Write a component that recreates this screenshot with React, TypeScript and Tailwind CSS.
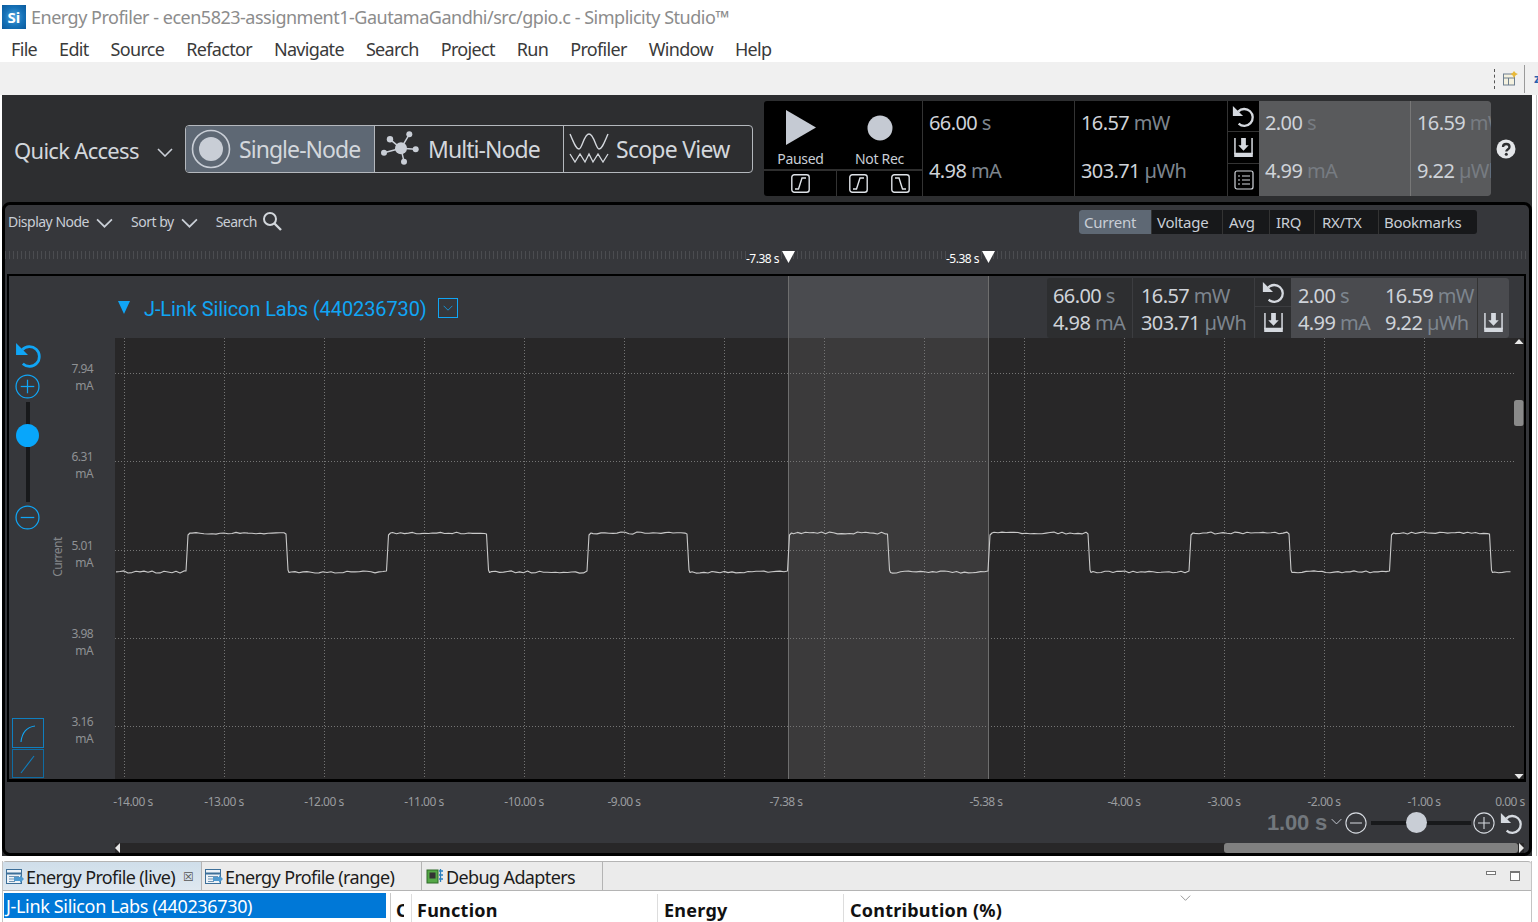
import React from "react";

const F = { fontFamily: '"Noto Sans", sans-serif' };

function Chevron({ c = "#c9ced6", w = 16, h = 9, sw = 1.6 }: { c?: string; w?: number; h?: number; sw?: number }) {
  return (
    <svg width={w} height={h} viewBox="0 0 16 9" className="shrink-0">
      <path d="M1 1 L8 8 L15 1" fill="none" stroke={c} strokeWidth={sw} />
    </svg>
  );
}
function Reload({ c = "#d5d9df", s = 22 }: { c?: string; s?: number }) {
  return (
    <svg width={s} height={s} viewBox="0 0 26 26" className="shrink-0">
      <path d="M7 7.5 A9.5 9.5 0 1 1 7.5 21" fill="none" stroke={c} strokeWidth="2.6" />
      <path d="M1 1 L1 12.5 L12.5 12.5 Z" fill={c} />
    </svg>
  );
}
function Save({ c = "#d5d9df", s = 20 }: { c?: string; s?: number }) {
  return (
    <svg width={s} height={s} viewBox="0 0 20 20" className="shrink-0">
      <path d="M1 0 V17 M19 0 V17" fill="none" stroke={c} strokeWidth="1.6" />
      <path d="M0.2 15.5 H19.8 V20 H0.2 Z" fill={c} />
      <path d="M7.5 0 H12.5 V7.5 H15.5 L10 13.5 L4.5 7.5 H7.5 Z" fill={c} />
    </svg>
  );
}
function CircleBtn({ minus, c, s = 24 }: { minus?: boolean; c: string; s?: number }) {
  return (
    <svg width={s} height={s} viewBox="0 0 24 24" className="shrink-0">
      <circle cx="12" cy="12" r="11" fill="none" stroke={c} strokeWidth="1.2" />
      <path d="M5.5 12 H18.5" stroke={c} strokeWidth="1.2" />
      {!minus && <path d="M12 5.5 V18.5" stroke={c} strokeWidth="1.2" />}
    </svg>
  );
}
function Edge({ fall }: { fall?: boolean }) {
  return (
    <svg width="19" height="19" viewBox="0 0 19 19" className="shrink-0">
      <rect x="0.8" y="0.8" width="17.4" height="17.4" rx="2.5" fill="none" stroke="#dfe3e8" strokeWidth="1.4" />
      <path d={fall ? "M4 4 H8 L11.5 15 H15" : "M4 15 H7.5 L11 4 H15"} fill="none" stroke="#dfe3e8" strokeWidth="1.4" />
    </svg>
  );
}
function Val({ v, u, dim = "#7d858e" }: { v: string; u: string; dim?: string }) {
  return (
    <div className="whitespace-nowrap text-[20px] leading-[24px] tracking-[-0.6px] text-[#cfd3d9]">
      {v} <span style={{ color: dim }}>{u}</span>
    </div>
  );
}
function TabIcon() {
  return (
    <svg width="18" height="16" viewBox="0 0 18 16" className="shrink-0">
      <rect x="0.5" y="0.5" width="15" height="14" fill="#eef3f8" stroke="#3d6f99" />
      <path d="M1 4.5 H15" stroke="#3d6f99" strokeWidth="2" />
      <path d="M3 7.5 H13 M3 10 H9 M3 12.5 H9" stroke="#6f94b3" />
      <path d="M8 8 H14 V6 L18 10 L14 14 V12 H8 Z" fill="#4f9ad0" />
    </svg>
  );
}
function Tab({ label, w, active, close, icon }: { label: string; w: number; active?: boolean; close?: boolean; icon: React.ReactNode }) {
  return (
    <div
      style={{ width: w }}
      className={`flex h-full shrink-0 items-center gap-[2px] border-r border-[#b4b4b4] pl-[3px] pt-[2px] text-[18px] tracking-[-0.62px] text-[#1c1c1c] ${
        active ? "bg-gradient-to-b from-[#cfdeea] to-[#dfe8f0]" : ""
      }`}
    >
      {icon}
      <span className="whitespace-nowrap">{label}</span>
      {close && <span className="ml-[6px] text-[12px] leading-none text-[#555]">☒</span>}
    </div>
  );
}

const xticks = [124.5, 224.5, 324.5, 424.5, 524.5, 624.5, 724.5, 824.5, 924.5, 1024.5, 1124.5, 1224.5, 1324.5, 1424.5];
const yticks = [373.5, 461.5, 550.5, 638.5, 726.5];
const ylabels: [string, number][] = [["7.94", 368], ["6.31", 456], ["5.01", 545], ["3.98", 633], ["3.16", 721]];
const timeLabels: [string, number][] = [
  ["-14.00 s", 133], ["-13.00 s", 224], ["-12.00 s", 324], ["-11.00 s", 424], ["-10.00 s", 524], ["-9.00 s", 624],
  ["-7.38 s", 786], ["-5.38 s", 986], ["-4.00 s", 1124], ["-3.00 s", 1224], ["-2.00 s", 1324], ["-1.00 s", 1424], ["0.00 s", 1510],
];

function noise(x: number) {
  const r = Math.sin(x * 12.9898) * 43758.5453;
  return (r - Math.floor(r)) * 2.2 - 1.1;
}
function flat(pts: string[], a: number, b: number, y: number) {
  for (let i = 0, n = Math.floor((b - a) / 4); i <= n; i++) {
    const x = a + i * 4;
    pts.push(`${x},${(y + noise(x)).toFixed(1)}`);
  }
}
function wave(): string {
  const rises = [186, 386.5, 587, 787.5, 988, 1189, 1389.5];
  const pts: string[] = [];
  let from = 116;
  for (const r of rises) {
    flat(pts, from, r - 2, 572);
    pts.push(`${r},571`, `${r + 2},535`, `${r + 4},533`);
    flat(pts, r + 6, r + 98, 533);
    pts.push(`${r + 100},534`, `${r + 102},570`, `${r + 103},572.5`);
    from = r + 105;
  }
  flat(pts, from, 1514, 572);
  return pts.join(" ");
}

export default function App() {
  return (
    <div style={F} className="flex h-[922px] w-[1538px] flex-col overflow-hidden bg-white">
      {/* title */}
      <div className="flex h-[32px] shrink-0 items-center pl-[2px] pt-[2px]">
        <div className="flex h-[24px] w-[24px] items-center justify-center bg-[radial-gradient(circle,#4fa3dd_0%,#1672b8_55%,#0b5a9c_100%)] text-[15px] font-bold leading-none text-white">
          Si
        </div>
        <span className="ml-[5px] mt-[1px] whitespace-nowrap text-[18px] tracking-[-0.49px] text-[#8c8c8c]">
          Energy Profiler - ecen5823-assignment1-GautamaGandhi/src/gpio.c - Simplicity Studio™
        </span>
      </div>
      {/* menu */}
      <div className="flex h-[30px] shrink-0 items-center gap-[22px] pl-[11px] pt-[5px] text-[18px] tracking-[-0.68px] text-[#3a3a3a]">
        {["File", "Edit", "Source", "Refactor", "Navigate", "Search", "Project", "Run", "Profiler", "Window", "Help"].map((m) => (
          <span key={m}>{m}</span>
        ))}
      </div>
      {/* toolbar */}
      <div className="flex h-[33px] shrink-0 items-center justify-end bg-[#f0f0f0]">
        <div className="mr-[8px] h-[20px] border-l border-dashed border-[#555]" />
        <svg width="15" height="15" viewBox="0 0 15 15" className="mr-[6px]">
          <rect x="0.5" y="3" width="11" height="11" fill="#f4f1df" stroke="#6e7f8f" />
          <path d="M1 7 H11 M5.5 7 V14" stroke="#6e7f8f" />
          <path d="M11 0 L12.7 2 L15 3 L12.7 4.3 L11 7 L9.5 4.3 L7.5 3 L9.5 2 Z" fill="#e8b93a" />
        </svg>
        <div className="mr-[9px] h-[28px] border-l border-[#9a9a9a]" />
        <span className="w-[4px] overflow-hidden text-[13px] font-bold text-[#2a62b0]">z</span>
      </div>
      {/* dark area */}
      <div className="flex h-[761px] shrink-0">
        <div className="ml-[2px] flex w-[1530px] shrink-0 flex-col bg-[#2d2e30]">
          {/* top row */}
          <div className="flex h-[107px] shrink-0 items-start">
            <div className="flex h-[77px] w-[183px] shrink-0 items-end pb-[7px] pl-[12px] text-[#d3d7dc]">
              <span className="whitespace-nowrap text-[22px] leading-[30px] tracking-[-0.7px]">Quick Access</span>
              <span className="mb-[8px] ml-[18px]"><Chevron /></span>
            </div>
            <div className="mt-[30px] flex h-[48px] w-[568px] shrink-0 overflow-hidden rounded-[4px] border border-[#b4b8bd] text-[23px] tracking-[-0.95px] text-[#d3d7dc]">
              <div className="flex w-[189px] shrink-0 items-center border-r border-[#b4b8bd] bg-[#5e6874] pl-[5px]">
                <svg width="40" height="40" viewBox="0 0 40 40" className="shrink-0">
                  <circle cx="20" cy="20" r="18.5" fill="none" stroke="#c9ced6" strokeWidth="1.6" />
                  <circle cx="20" cy="20" r="12" fill="#c9ced6" />
                </svg>
                <span className="ml-[8px]">Single-Node</span>
              </div>
              <div className="flex w-[189px] shrink-0 items-center border-r border-[#b4b8bd] pl-[6px]">
                <svg width="40" height="36" viewBox="0 0 40 36" className="shrink-0">
                  <path d="M20 17.3 L9 8.3 M20 17.3 L28.3 3.3 M20 17.3 L34.7 18.3 M20 17.3 L23 30.7 M20 17.3 L3 21.7" stroke="#c9ced6" strokeWidth="1.5" />
                  <circle cx="20" cy="17.3" r="6" fill="#c9ced6" />
                  <circle cx="9" cy="8.3" r="3.2" fill="#c9ced6" />
                  <circle cx="28.3" cy="3.3" r="3" fill="#c9ced6" />
                  <circle cx="34.7" cy="18.3" r="3" fill="#c9ced6" />
                  <circle cx="23" cy="30.7" r="3" fill="#c9ced6" />
                  <circle cx="3" cy="21.7" r="3" fill="#c9ced6" />
                </svg>
                <span className="ml-[7px]">Multi-Node</span>
              </div>
              <div className="flex flex-1 items-center pl-[5px]">
                <svg width="40" height="34" viewBox="0 0 40 34" className="shrink-0">
                  <path d="M1 2 C5 11 7 17 10 17 C13 17 15 2 20 2 C25 2 27 17 30 17 C33 17 35 11 39 2" fill="none" stroke="#d3d7dc" strokeWidth="1.4" />
                  <path d="M1 22 L6 30 L11 22 L16 30 L20 22 L24 30 L29 22 L34 30 L39 22" fill="none" stroke="#d3d7dc" strokeWidth="1.3" />
                </svg>
                <span className="ml-[7px] whitespace-nowrap tracking-[-0.75px]">Scope View</span>
              </div>
            </div>
            {/* black stats */}
            <div className="ml-[11px] mt-[6px] flex h-[95px] w-[727px] shrink-0 overflow-hidden rounded-[3px] bg-black">
              <div className="flex w-[159px] shrink-0 flex-col border-r border-[#333]">
                <div className="flex h-[70px] shrink-0 border-b-2 border-[#2e2e2e] text-[14px] leading-[16px] tracking-[-0.3px] text-[#c9ced6]">
                  <div className="flex w-[73px] flex-col items-center pt-[9px]">
                    <svg width="30" height="35" viewBox="0 0 30 35"><path d="M0 0 L30 17.5 L0 35 Z" fill="#c5cad3" /></svg>
                    <span className="mt-[6px]">Paused</span>
                  </div>
                  <div className="flex flex-1 flex-col items-center pt-[14px]">
                    <svg width="26" height="26" viewBox="0 0 26 26"><circle cx="13" cy="13" r="12.5" fill="#c5cad3" /></svg>
                    <span className="mt-[10px]">Not Rec</span>
                  </div>
                </div>
                <div className="flex flex-1 items-center">
                  <div className="flex h-full w-[73px] items-center justify-center border-r border-[#333]"><Edge /></div>
                  <div className="flex flex-1 items-center justify-center gap-[23px]"><Edge /><Edge fall /></div>
                </div>
              </div>
              <div className="flex w-[152px] shrink-0 flex-col justify-between border-r border-[#333] pb-[13px] pl-[6px] pt-[10px]">
                <Val v="66.00" u="s" /><Val v="4.98" u="mA" />
              </div>
              <div className="flex w-[153px] shrink-0 flex-col justify-between border-r border-[#333] pb-[13px] pl-[6px] pt-[10px]">
                <Val v="16.57" u="mW" /><Val v="303.71" u="µWh" />
              </div>
              <div className="flex w-[31px] shrink-0 flex-col">
                <div className="flex h-[31px] items-center justify-center border-b border-[#333]"><Reload s={23} /></div>
                <div className="flex h-[32px] items-center justify-center border-b border-[#333]"><Save s={19} /></div>
                <div className="flex flex-1 items-center justify-center">
                  <svg width="20" height="20" viewBox="0 0 20 20">
                    <rect x="1" y="1" width="18" height="18" rx="2" fill="none" stroke="#d5d9df" strokeWidth="1.2" />
                    <path d="M4 6 H6 M8 6 H16 M4 10 H6 M8 10 H16 M4 14 H6 M8 14 H16" stroke="#d5d9df" strokeWidth="1.2" />
                  </svg>
                </div>
              </div>
              <div className="flex w-[152px] shrink-0 flex-col justify-between border-r border-[#777] bg-[#595a5c] pb-[13px] pl-[6px] pt-[10px]">
                <Val v="2.00" u="s" dim="#777c82" /><Val v="4.99" u="mA" dim="#777c82" />
              </div>
              <div className="flex flex-1 flex-col justify-between overflow-hidden bg-[#595a5c] pb-[13px] pl-[6px] pt-[10px]">
                <Val v="16.59" u="mW" dim="#777c82" /><Val v="9.22" u="µWh" dim="#777c82" />
              </div>
            </div>
            <svg width="20" height="20" viewBox="0 0 20 20" className="ml-[5px] mt-[44px] shrink-0">
              <circle cx="10" cy="10" r="9.5" fill="#e4e6e9" />
              <path d="M7 8 C7 4 13.5 4 13.5 8 C13.5 10.5 10.3 10.5 10.3 12.5" fill="none" stroke="#2d2e30" strokeWidth="2.3" />
              <circle cx="10.3" cy="15.3" r="1.5" fill="#2d2e30" />
            </svg>
          </div>

          {/* inner panel */}
          <div className="flex h-[654px] shrink-0 flex-col overflow-hidden rounded-[8px] border-[3px] border-black bg-[#36373b]">
            {/* filter row */}
            <div className="flex h-[44px] shrink-0 items-center pb-[11px] pl-[3px] text-[14px] tracking-[-0.5px] text-[#c9ced6]">
              <span>Display Node</span>
              <span className="ml-[7px] mt-[3px]"><Chevron w={17} h={10} /></span>
              <span className="ml-[18px]">Sort by</span>
              <span className="ml-[7px] mt-[3px]"><Chevron w={17} h={10} /></span>
              <span className="ml-[18px]">Search</span>
              <svg width="20" height="20" viewBox="0 0 20 20" className="mb-[1px] ml-[5px]">
                <circle cx="8" cy="8" r="6" fill="none" stroke="#d3d7dc" strokeWidth="2" />
                <path d="M12.5 12.5 L19 19" stroke="#d3d7dc" strokeWidth="2.4" />
              </svg>
              <div className="ml-[797px] flex h-[24px] w-[398px] overflow-hidden rounded-[3px] bg-[#17181a] text-[15px] leading-[24px] tracking-[-0.25px]">
                <div className="w-[72px] bg-[#5e6874] pl-[5px]">Current</div>
                <div className="w-[71px] border-l border-[#333] pl-[5px]">Voltage</div>
                <div className="w-[47px] border-l border-[#333] pl-[6px]">Avg</div>
                <div className="w-[45px] border-l border-[#333] pl-[6px]">IRQ</div>
                <div className="w-[64px] border-l border-[#333] pl-[7px]">RX/TX</div>
                <div className="flex-1 border-l border-[#333] pl-[5px]">Bookmarks</div>
              </div>
            </div>
            {/* ruler */}
            <div className="relative h-[25px] shrink-0">
              <div className="absolute left-0 right-0 top-[2px] h-[8px] bg-[repeating-linear-gradient(90deg,#4b4c50_0,#4b4c50_1px,transparent_1px,transparent_4px)]" />
              <span className="absolute left-[741px] top-[2px] bg-[#36373b] text-[12px] leading-[16px] tracking-[-0.5px] text-white">-7.38 s</span>
              <svg width="13" height="12" viewBox="0 0 13 12" className="absolute left-[777px] top-[2px]"><path d="M0 0 H13 L6.5 12 Z" fill="#fff" /></svg>
              <span className="absolute left-[941px] top-[2px] bg-[#36373b] text-[12px] leading-[16px] tracking-[-0.5px] text-white">-5.38 s</span>
              <svg width="13" height="12" viewBox="0 0 13 12" className="absolute left-[977px] top-[2px]"><path d="M0 0 H13 L6.5 12 Z" fill="#fff" /></svg>
            </div>

            {/* chart frame */}
            <div className="ml-[2px] mr-[3px] flex h-[508px] shrink-0 flex-col border-x-2 border-b-[3px] border-t-2 border-black">
              <div className="relative flex-1 overflow-hidden">
                {/* node header */}
                <div className="flex h-[62px] items-center pl-[109px] pr-[15px]">
                  <svg width="12" height="13" viewBox="0 0 12 13" className="mt-[1px]"><path d="M0 0 H12 L6 13 Z" fill="#10a5f5" /></svg>
                  <span className="ml-[14px] mt-[4px] whitespace-nowrap text-[20px] tracking-[-0.1px] text-[#10a5f5]" style={{ fontFamily: "Roboto, sans-serif" }}>
                    J-Link Silicon Labs (440236730)
                  </span>
                  <div className="ml-[11px] mt-[2px] flex h-[20px] w-[20px] items-center justify-center border border-[#10a5f5]">
                    <Chevron c="#10a5f5" w={10} h={6} sw={1.3} />
                  </div>
                  <div className="ml-auto flex h-[60px] w-[462px] shrink-0 self-end overflow-hidden rounded-[3px] bg-[#2d2e30]">
                    <div className="flex w-[86px] flex-col justify-center gap-[3px] border-r border-[#3c3d40] pl-[6px] pt-[2px]">
                      <Val v="66.00" u="s" /><Val v="4.98" u="mA" />
                    </div>
                    <div className="flex w-[122px] flex-col justify-center gap-[3px] border-r border-[#3c3d40] pl-[8px] pt-[2px]">
                      <Val v="16.57" u="mW" /><Val v="303.71" u="µWh" />
                    </div>
                    <div className="flex w-[36px] flex-col">
                      <div className="flex h-[29px] items-center justify-center border-b border-[#3c3d40]"><Reload s={23} /></div>
                      <div className="flex flex-1 items-center justify-center"><Save s={19} /></div>
                    </div>
                    <div className="flex w-[187px] bg-[#4a4b4f]">
                      <div className="flex w-[94px] flex-col justify-center gap-[3px] pl-[7px] pt-[2px]">
                        <Val v="2.00" u="s" /><Val v="4.99" u="mA" />
                      </div>
                      <div className="flex flex-1 flex-col justify-center gap-[3px] border-r border-[#333] pt-[2px]">
                        <Val v="16.59" u="mW" /><Val v="9.22" u="µWh" />
                      </div>
                    </div>
                    <div className="flex flex-1 items-end justify-center bg-[#4a4b4f] pb-[6px]"><Save s={19} /></div>
                  </div>
                </div>
                {/* plot row */}
                <div className="flex h-[441px]">
                  <div className="flex w-[106px] shrink-0 flex-col items-start pl-[6px] pt-[4px]">
                    <Reload c="#10a5f5" s={27} />
                    <div className="mt-[5px]"><CircleBtn c="#10a5f5" s={25} /></div>
                    <div className="relative ml-[11px] mt-[3px] h-[100px] w-[4px] bg-[#18191b]">
                      <div className="absolute left-[-10px] top-[22px] h-[23px] w-[23px] rounded-full bg-[#08a6fb]" />
                    </div>
                    <div className="mt-[3px]"><CircleBtn minus c="#10a5f5" s={25} /></div>
                    <div className="mb-[1px] ml-[-3px] mt-auto flex w-[32px] flex-col gap-[1px]">
                      <div className="flex h-[30px] items-center justify-center border border-[#0f7fc0]">
                        <svg width="20" height="20" viewBox="0 0 20 20"><path d="M3 19 C4 9 10 4 17 3" fill="none" stroke="#10a5f5" strokeWidth="1.1" /></svg>
                      </div>
                      <div className="flex h-[29px] items-center justify-center border border-[#0f6ca3]">
                        <svg width="20" height="20" viewBox="0 0 20 20"><path d="M3 19 L16 2" fill="none" stroke="#0f7fc0" strokeWidth="1.1" /></svg>
                      </div>
                    </div>
                  </div>
                  <div className="flex-1 bg-[#282728]" />
                </div>
                {/* chart canvas, drawn in page coordinates */}
                <svg width="1515" height="506" viewBox="9 276 1515 506" className="pointer-events-none absolute left-0 top-0">
                  <rect x="789" y="276" width="200" height="62" fill="#fff" fillOpacity="0.1" />
                  <rect x="789" y="338" width="200" height="441" fill="#fff" fillOpacity="0.09" />
                  {xticks.map((x) => (
                    <line key={x} x1={x} x2={x} y1={338} y2={779} stroke="#757575" strokeDasharray="1 2" />
                  ))}
                  {yticks.map((y) => (
                    <line key={y} x1={115} x2={1514} y1={y} y2={y} stroke="#757575" strokeDasharray="1 2" />
                  ))}
                  <line x1="788.5" x2="788.5" y1="276" y2="782" stroke="#6e6e6e" />
                  <line x1="988.5" x2="988.5" y1="276" y2="782" stroke="#6e6e6e" />
                  <polyline points={wave()} fill="none" stroke="#c9c9c9" strokeWidth="1.1" strokeLinejoin="round" />
                  <path d="M1514.5 344 L1519 339 L1523.5 344 Z" fill="#e8e8e8" />
                  <path d="M1514.5 774 L1519 779 L1523.5 774 Z" fill="#e8e8e8" />
                  <rect x="1514" y="400" width="9.5" height="26" rx="2.5" fill="#8a8a8a" />
                </svg>
                {ylabels.map(([v, y]) => (
                  <div
                    key={v}
                    style={{ top: y - 276 - 8 }}
                    className="absolute left-[45px] w-[39px] text-right text-[12px] leading-[17px] tracking-[-0.6px] text-[#8f9194]"
                  >
                    <div>{v}</div>
                    <div>mA</div>
                  </div>
                ))}
                <div className="absolute left-[24px] top-[274px] w-[50px] -rotate-90 text-center text-[12px] leading-[14px] tracking-[-0.5px] text-[#85878a]">
                  Current
                </div>
              </div>
            </div>

            {/* time axis */}
            <div className="relative h-[61px] shrink-0">
              {timeLabels.map(([t, x]) => (
                <span
                  key={t}
                  style={{ left: x - 5 - 40 }}
                  className="absolute top-[12px] w-[80px] text-center text-[12px] leading-[16px] tracking-[-0.5px] text-[#9a9c9f]"
                >
                  {t}
                </span>
              ))}
              <div className="absolute right-[6px] top-[27px] flex items-center">
                <span className="whitespace-nowrap text-[22px] font-bold leading-[28px] tracking-[-0.2px] text-[#72777d]" style={{ fontFamily: '"Liberation Sans", sans-serif' }}>1.00 s</span>
                <span className="mb-[3px] ml-[4px]"><Chevron w={11} h={7} sw={1.4} /></span>
                <span className="ml-[3px]"><CircleBtn minus c="#d5d9df" s={22} /></span>
                <div className="relative ml-[4px] h-[4px] w-[100px] bg-[#18191b]">
                  <div className="absolute left-[35px] top-[-9px] h-[21px] w-[21px] rounded-full bg-[#c9ced6]" />
                </div>
                <span className="ml-[2px]"><CircleBtn c="#d5d9df" s={22} /></span>
                <span className="ml-[5px]"><Reload s={23} /></span>
              </div>
            </div>
            {/* hscroll */}
            <div className="ml-[110px] mr-[5px] flex h-[10px] shrink-0 items-center bg-[#282728]">
              <svg width="5" height="10" viewBox="0 0 5 10" className="shrink-0"><path d="M5 0 L0 5 L5 10 Z" fill="#e8e8e8" /></svg>
              <div className="ml-[1104px] h-[10px] w-[294px] rounded-[3px] bg-[#808080]" />
              <svg width="5" height="10" viewBox="0 0 5 10" className="ml-[1px] shrink-0"><path d="M0 0 L5 5 L0 10 Z" fill="#e8e8e8" /></svg>
            </div>
          </div>
        </div>
        <div className="ml-[4px] flex-1 border-l border-[#c4c4c4] bg-white" />
      </div>
      {/* bottom */}
      <div className="ml-[2px] mt-[5px] flex w-[1530px] flex-1 flex-col border-x border-[#c4c4c4]">
        <div className="flex h-[30px] shrink-0 items-center rounded-t-[3px] border-y border-[#b4b4b4] bg-[#ebebeb]">
          <Tab label="Energy Profile (live)" w={199} active close icon={<TabIcon />} />
          <Tab label="Energy Profile (range)" w={220} icon={<TabIcon />} />
          <Tab
            label="Debug Adapters"
            w={181}
            icon={
              <svg width="18" height="16" viewBox="0 0 18 16" className="ml-[1px] shrink-0">
                <rect x="1" y="1" width="11" height="13" fill="#55a847" stroke="#2e6b28" />
                <rect x="3.5" y="3.5" width="6" height="6" fill="#333" />
                <path d="M13 2 H17 M13 6 H17 M13 10 H17 M14.5 0 V13" stroke="#2a7fc0" strokeWidth="1.3" />
              </svg>
            }
          />
          <div className="ml-auto flex items-center gap-[14px] pr-[11px]">
            <div className="mb-[6px] h-[4px] w-[10px] border border-[#777] bg-white" />
            <div className="h-[10px] w-[10px] border border-t-2 border-[#777] bg-white" />
          </div>
        </div>
        <div className="flex flex-1 overflow-hidden pl-[1px] pt-[2px]">
          <div className="h-[25px] w-[382px] shrink-0 whitespace-nowrap bg-[#0078d7] pl-[2px] pt-[1px] text-[18px] leading-[25px] tracking-[-0.34px] text-white">
            J-Link Silicon Labs (440236730)
          </div>
          <div className="relative ml-[4px] flex flex-1 border-l border-[#c8c8c8] pt-[1px] text-[18px] font-bold leading-[33px] tracking-[0.25px] text-[#111]">
            <div className="w-[21px] border-r border-[#ddd] pl-[5px]">
              <div className="w-[8px] overflow-hidden">C</div>
            </div>
            <div className="w-[246px] border-r border-[#ddd] pl-[5px]">Function</div>
            <div className="w-[186px] border-r border-[#ddd] pl-[6px]">Energy</div>
            <div className="pl-[6px]">Contribution (%)</div>
            <span className="absolute left-[789px] top-[2px]"><Chevron c="#666" w={11} h={6} sw={1} /></span>
          </div>
          <div className="w-[8px] shrink-0" />
        </div>
      </div>
    </div>
  );
}
